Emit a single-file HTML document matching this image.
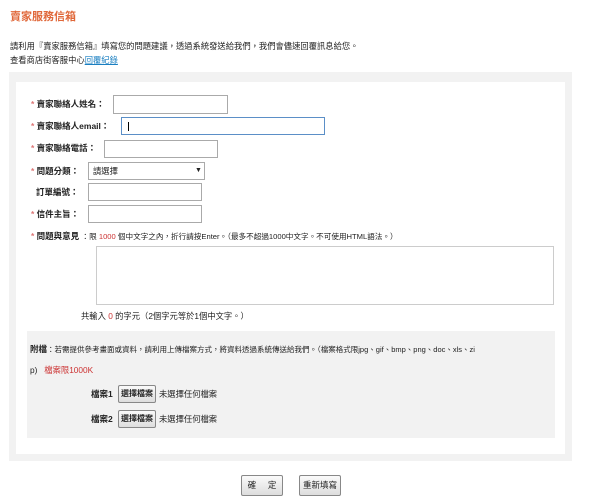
<!DOCTYPE html>
<html><head><meta charset="utf-8"><style>
body{margin:0;width:600px;height:504px;background:#fff;font-family:"Liberation Sans","Noto Sans CJK TC",sans-serif;font-size:8.3px;color:#222;position:relative;overflow:hidden}
.a{position:absolute;white-space:nowrap;line-height:12px}
.r{color:#c33}
.s{color:#d77}
.b{font-weight:bold;font-size:8.5px}
.in{position:absolute;border:1px solid #aaa;background:#fff;box-sizing:border-box}
.btn{position:absolute;border:1px solid #888;background:linear-gradient(#fafafa,#ddd);box-sizing:border-box;text-align:center;font-size:8.5px;line-height:17px;border-radius:2px;white-space:nowrap}
</style></head><body>
<div class="a" style="left:10px;top:11px;font-size:11px;font-weight:bold;color:#e0683a">賣家服務信箱</div>
<div class="a" style="left:10px;top:40px">請利用『賣家服務信箱』填寫您的問題建議，透過系統發送給我們，我們會儘速回覆訊息給您。</div>
<div class="a" style="left:10px;top:54px">查看商店街客服中心<span style="color:#1a7fc1;text-decoration:underline">回覆紀錄</span></div>
<div style="position:absolute;left:9px;top:72px;width:563px;height:389px;background:#f2f2f2"></div>
<div style="position:absolute;left:16px;top:82px;width:549px;height:372px;background:#fff"></div>

<div class="a b" style="left:31px;top:98px"><span class="s">*</span> 賣家聯絡人姓名：</div>
<div class="in" style="left:113px;top:95px;width:115px;height:19px"></div>
<div class="a b" style="left:31px;top:120px"><span class="s">*</span> 賣家聯絡人email：</div>
<div class="in" style="left:121px;top:117px;width:204px;height:18px;border-color:#5b8fc7"><div style="position:absolute;left:6px;top:4px;width:1px;height:9px;background:#000"></div></div>
<div class="a b" style="left:31px;top:142px"><span class="s">*</span> 賣家聯絡電話：</div>
<div class="in" style="left:104px;top:140px;width:114px;height:18px"></div>
<div class="a b" style="left:31px;top:165px"><span class="s">*</span> 問題分類：</div>
<div class="in" style="left:88px;top:162px;width:117px;height:18px"><span class="a" style="left:4px;top:2px">請選擇</span><span class="a" style="left:106px;top:2px;font-size:7px">▼</span></div>
<div class="a b" style="left:36px;top:186px">訂單編號：</div>
<div class="in" style="left:88px;top:183px;width:114px;height:18px"></div>
<div class="a b" style="left:31px;top:208px"><span class="s">*</span> 信件主旨：</div>
<div class="in" style="left:88px;top:205px;width:114px;height:18px"></div>
<div class="a" style="left:31px;top:230px;font-size:7.6px"><span class="b"><span class="s">*</span> 問題與意見 </span>：限 <span class="r">1000</span> 個中文字之內，折行請按Enter。（最多不超過1000中文字。不可使用HTML語法。）</div>
<div class="in" style="left:96px;top:246px;width:458px;height:59px;border-color:#ccc"></div>
<div class="a" style="left:81px;top:310px">共輸入 <span class="r">0</span> 的字元（2個字元等於1個中文字。）</div>

<div style="position:absolute;left:27px;top:331px;width:528px;height:107px;background:#f2f2f2"></div>
<div class="a" style="left:30px;top:343px;font-size:7.5px"><span class="b">附檔</span>：若需提供參考畫面或資料，請利用上傳檔案方式，將資料透過系統傳送給我們。（檔案格式限jpg、gif、bmp、png、doc、xls、zi</div>
<div class="a" style="left:30px;top:364px">p)&nbsp;&nbsp; <span class="r">檔案限1000K</span></div>
<div class="a b" style="left:91px;top:388px">檔案1</div>
<div class="btn" style="left:118px;top:385px;width:38px;height:18px;line-height:16px;font-weight:bold;font-size:8px">選擇檔案</div>
<div class="a" style="left:159px;top:388px">未選擇任何檔案</div>
<div class="a b" style="left:91px;top:413px">檔案2</div>
<div class="btn" style="left:118px;top:410px;width:38px;height:18px;line-height:16px;font-weight:bold;font-size:8px">選擇檔案</div>
<div class="a" style="left:159px;top:413px">未選擇任何檔案</div>

<div class="btn" style="left:241px;top:475px;width:42px;height:21px;line-height:19px">確&nbsp;&nbsp;&nbsp;&nbsp;&nbsp;定</div>
<div class="btn" style="left:299px;top:475px;width:42px;height:21px;line-height:19px">重新填寫</div>
</body></html>
